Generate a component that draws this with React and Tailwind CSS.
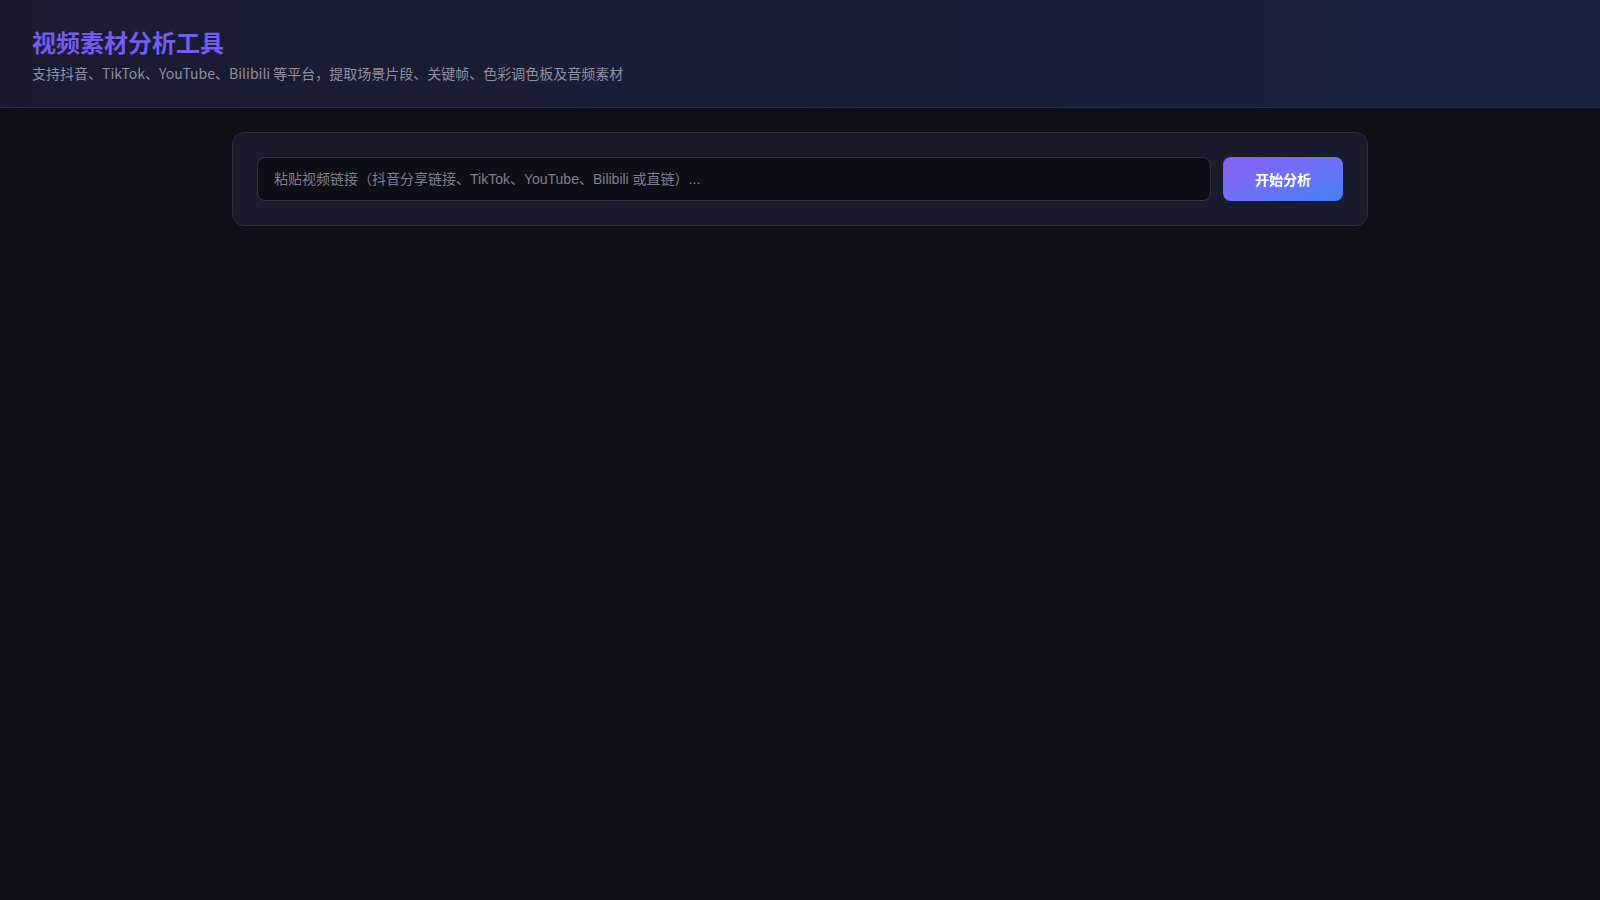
export default function App() {
  return (
    <div className="min-h-screen w-full bg-[#0f0f17]" style={{ fontFamily: '"Noto Sans CJK SC", "Noto Sans", sans-serif' }}>
      <header className="border-b border-[#2a2b48] bg-gradient-to-r from-[#1b1b30] to-[#17213f] px-8 pt-[26px] pb-6">
        <h1 className="text-2xl font-bold leading-8 text-[#735cf0]">视频素材分析工具</h1>
        <p className="mt-[5px] text-sm leading-5 text-[#8e90a0]">支持抖音、TikTok、YouTube、Bilibili 等平台，提取场景片段、关键帧、色彩调色板及音频素材</p>
      </header>
      <main className="mx-auto max-w-[1200px] px-8 pt-6">
        <div className="flex gap-3 rounded-xl border border-[#2c2c48] bg-[#1b1b2e] p-6">
          <input
            type="text"
            placeholder="粘贴视频链接（抖音分享链接、TikTok、YouTube、Bilibili 或直链）..."
            className="h-11 flex-1 rounded-lg border border-[#33334f] bg-[#0e0e16] px-4 text-sm text-white outline-none placeholder:text-[#7e7e8c]"
            style={{ fontFamily: '"Liberation Sans", "Noto Sans CJK SC", sans-serif' }}
          />
          <button className="h-11 w-[120px] rounded-lg bg-gradient-to-br from-[#8b5cf6] to-[#3b82f6] text-sm font-bold text-white">
            开始分析
          </button>
        </div>
      </main>
    </div>
  );
}
